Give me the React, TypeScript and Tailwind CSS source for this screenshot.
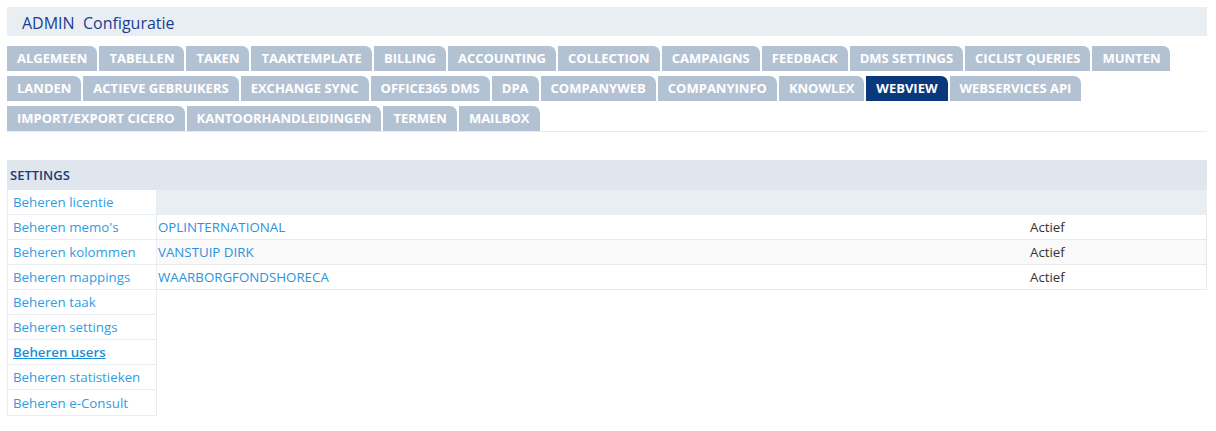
import React from 'react'

const TAB_ROWS = [
  ['ALGEMEEN', 'TABELLEN', 'TAKEN', 'TAAKTEMPLATE', 'BILLING', 'ACCOUNTING', 'COLLECTION', 'CAMPAIGNS', 'FEEDBACK', 'DMS SETTINGS', 'CICLIST QUERIES', 'MUNTEN'],
  ['LANDEN', 'ACTIEVE GEBRUIKERS', 'EXCHANGE SYNC', 'OFFICE365 DMS', 'DPA', 'COMPANYWEB', 'COMPANYINFO', 'KNOWLEX', 'WEBVIEW', 'WEBSERVICES API'],
  ['IMPORT/EXPORT CICERO', 'KANTOORHANDLEIDINGEN', 'TERMEN', 'MAILBOX'],
]

const MENU = [
  'Beheren licentie',
  "Beheren memo's",
  'Beheren kolommen',
  'Beheren mappings',
  'Beheren taak',
  'Beheren settings',
  'Beheren users',
  'Beheren statistieken',
  'Beheren e-Consult',
]

const USERS = ['OPLINTERNATIONAL', 'VANSTUIP DIRK', 'WAARBORGFONDSHORECA']

export default function App() {
  return (
    <div className="w-[1216px] h-[431px] bg-white pl-[7px] pr-[9px] pt-[7px]" style={{ fontFamily: '"Open Sans", sans-serif' }}>
      {/* header */}
      <div className="h-[29px] bg-[#e9eef3] flex items-center pl-[15px] pt-[2px]">
        <h1 className="text-[16px] text-[#1b3d92] whitespace-pre leading-none">ADMIN  Configuratie</h1>
      </div>

      {/* tabs */}
      <div className="mt-[10px] flex flex-col gap-[5px] border-b border-[#e6eaef]">
        {TAB_ROWS.map((row, i) => (
          <div key={i} className="flex gap-[2px]">
            {row.map(t => (
              <div
                key={t}
                className={`h-[25px] px-[10px] flex items-center rounded-tr-[7px] text-[13px] font-bold text-white ${t === 'WEBVIEW' ? 'bg-[#0a387c]' : 'bg-[#b3c2d3]'}`}
              >
                {t}
              </div>
            ))}
          </div>
        ))}
      </div>

      {/* settings */}
      <div className="mt-[28px] h-[30px] bg-[#dfe6ee] flex items-center pl-[3px] pt-[2px]">
        <span className="text-[13px] font-semibold text-[#1d3a7a]">SETTINGS</span>
      </div>
      <div className="flex items-start">
        <div className="w-[150px] border-x border-b border-[#e8edf2] bg-white">
          {MENU.map((m, i) => (
            <div key={m} className={`h-[25px] flex items-center pl-[5px] pt-[2px] text-[13.3px] ${i < MENU.length - 1 ? 'border-b border-[#e8edf2]' : ''}`}>
              <a href="#" className={m === 'Beheren users' ? 'font-semibold underline text-[#1a8fd8]' : 'text-[#2d9ee3]'}>{m}</a>
            </div>
          ))}
        </div>
        <div className="flex-1">
          <div className="h-[25px] bg-[#e9eef3]" />
          <div className="border-r border-[#e6e6e6]">
            {USERS.map((u, i) => (
              <div key={u} className={`h-[25px] grid grid-cols-[1fr_176px] items-center pt-[2px] border-b border-[#e9e9e9] text-[13.3px] ${i % 2 === 1 ? 'bg-[#f9f9f9]' : 'bg-white'}`}>
                <span className="pl-[1px] text-[#2b93dc]">{u}</span>
                <span className="text-[#333]">Actief</span>
              </div>
            ))}
          </div>
        </div>
      </div>
    </div>
  )
}
